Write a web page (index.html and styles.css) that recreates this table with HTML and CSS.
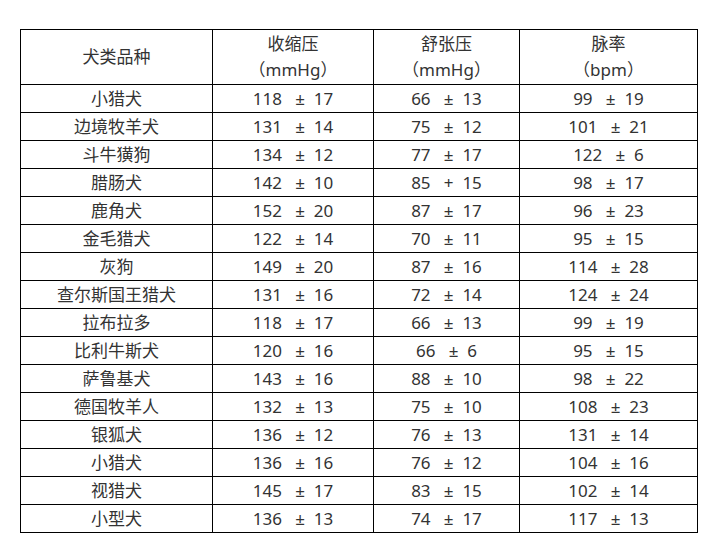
FILE: index.html
```html
<!DOCTYPE html>
<html lang="zh-CN">
<head>
<meta charset="utf-8">
<link rel="stylesheet" href="styles.css">
</head>
<body>
<table class="bp-table">
  <colgroup>
    <col class="c1"><col class="c2"><col class="c3"><col class="c4">
  </colgroup>
  <thead>
    <tr>
      <th>犬类品种</th>
      <th>收缩压<br>（mmHg）</th>
      <th>舒张压<br>（mmHg）</th>
      <th>脉率<br>（bpm）</th>
    </tr>
  </thead>
  <tbody>
    <tr><td>小猎犬</td><td>118&nbsp;&nbsp; ±&nbsp; 17</td><td>66&nbsp;&nbsp; ±&nbsp; 13</td><td>99&nbsp;&nbsp; ±&nbsp; 19</td></tr>
    <tr><td>边境牧羊犬</td><td>131&nbsp;&nbsp; ±&nbsp; 14</td><td>75&nbsp;&nbsp; ±&nbsp; 12</td><td>101&nbsp;&nbsp; ±&nbsp; 21</td></tr>
    <tr><td>斗牛獚狗</td><td>134&nbsp;&nbsp; ±&nbsp; 12</td><td>77&nbsp;&nbsp; ±&nbsp; 17</td><td>122&nbsp;&nbsp; ±&nbsp; 6</td></tr>
    <tr><td>腊肠犬</td><td>142&nbsp;&nbsp; ±&nbsp; 10</td><td>85&nbsp;&nbsp; +&nbsp; 15</td><td>98&nbsp;&nbsp; ±&nbsp; 17</td></tr>
    <tr><td>鹿角犬</td><td>152&nbsp;&nbsp; ±&nbsp; 20</td><td>87&nbsp;&nbsp; ±&nbsp; 17</td><td>96&nbsp;&nbsp; ±&nbsp; 23</td></tr>
    <tr><td>金毛猎犬</td><td>122&nbsp;&nbsp; ±&nbsp; 14</td><td>70&nbsp;&nbsp; ±&nbsp; 11</td><td>95&nbsp;&nbsp; ±&nbsp; 15</td></tr>
    <tr><td>灰狗</td><td>149&nbsp;&nbsp; ±&nbsp; 20</td><td>87&nbsp;&nbsp; ±&nbsp; 16</td><td>114&nbsp;&nbsp; ±&nbsp; 28</td></tr>
    <tr><td>查尔斯国王猎犬</td><td>131&nbsp;&nbsp; ±&nbsp; 16</td><td>72&nbsp;&nbsp; ±&nbsp; 14</td><td>124&nbsp;&nbsp; ±&nbsp; 24</td></tr>
    <tr><td>拉布拉多</td><td>118&nbsp;&nbsp; ±&nbsp; 17</td><td>66&nbsp;&nbsp; ±&nbsp; 13</td><td>99&nbsp;&nbsp; ±&nbsp; 19</td></tr>
    <tr><td>比利牛斯犬</td><td>120&nbsp;&nbsp; ±&nbsp; 16</td><td>66&nbsp;&nbsp; ±&nbsp; 6</td><td>95&nbsp;&nbsp; ±&nbsp; 15</td></tr>
    <tr><td>萨鲁基犬</td><td>143&nbsp;&nbsp; ±&nbsp; 16</td><td>88&nbsp;&nbsp; ±&nbsp; 10</td><td>98&nbsp;&nbsp; ±&nbsp; 22</td></tr>
    <tr><td>德国牧羊人</td><td>132&nbsp;&nbsp; ±&nbsp; 13</td><td>75&nbsp;&nbsp; ±&nbsp; 10</td><td>108&nbsp;&nbsp; ±&nbsp; 23</td></tr>
    <tr><td>银狐犬</td><td>136&nbsp;&nbsp; ±&nbsp; 12</td><td>76&nbsp;&nbsp; ±&nbsp; 13</td><td>131&nbsp;&nbsp; ±&nbsp; 14</td></tr>
    <tr><td>小猎犬</td><td>136&nbsp;&nbsp; ±&nbsp; 16</td><td>76&nbsp;&nbsp; ±&nbsp; 12</td><td>104&nbsp;&nbsp; ±&nbsp; 16</td></tr>
    <tr><td>视猎犬</td><td>145&nbsp;&nbsp; ±&nbsp; 17</td><td>83&nbsp;&nbsp; ±&nbsp; 15</td><td>102&nbsp;&nbsp; ±&nbsp; 14</td></tr>
    <tr><td>小型犬</td><td>136&nbsp;&nbsp; ±&nbsp; 13</td><td>74&nbsp;&nbsp; ±&nbsp; 17</td><td>117&nbsp;&nbsp; ±&nbsp; 13</td></tr>
  </tbody>
</table>
</body>
</html>
```
FILE: styles.css
```css
html, body {
  margin: 0;
  padding: 0;
  background: #fff;
}
body {
  padding: 29px 0 0 20px;
  font-family: "Noto Sans", "Noto Sans CJK SC", sans-serif;
  color: #333;
}
.bp-table {
  border-collapse: collapse;
  table-layout: fixed;
  width: 677px;
  font-size: 17px;
}
.c1 { width: 192px; }
.c2 { width: 161px; }
.c3 { width: 146px; }
.c4 { width: 178px; }
.bp-table th,
.bp-table td {
  border: 1px solid #000;
  text-align: center;
  vertical-align: middle;
  padding: 0;
  font-weight: normal;
  white-space: nowrap;
}
.bp-table th {
  height: 54px;
  line-height: 26px;
}
.bp-table td {
  height: 27px;
  line-height: 27px;
}
```
